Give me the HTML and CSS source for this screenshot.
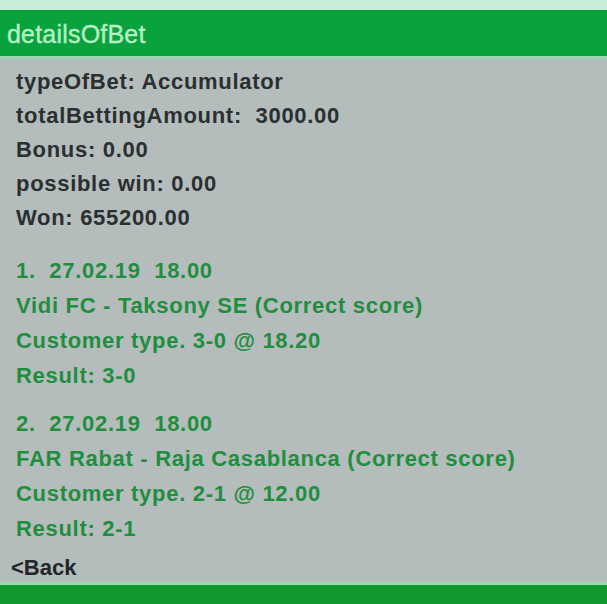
FILE: index.html
```html
<!DOCTYPE html>
<html>
<head>
<meta charset="utf-8">
<link rel="stylesheet" href="styles.css">
</head>
<body>
<div class="page">
  <div class="topstrip"></div>
  <div class="header">detailsOfBet</div>
  <div class="edge"></div>
  <div class="content">
    <div class="summary">
      <div class="line">typeOfBet: Accumulator</div>
      <div class="line">totalBettingAmount:&nbsp; 3000.00</div>
      <div class="line">Bonus: 0.00</div>
      <div class="line">possible win: 0.00</div>
      <div class="line">Won: 655200.00</div>
    </div>
    <div class="event">
      <div class="line">1.&nbsp; 27.02.19&nbsp; 18.00</div>
      <div class="line">Vidi FC - Taksony SE (Correct score)</div>
      <div class="line">Customer type. 3-0 @ 18.20</div>
      <div class="line">Result: 3-0</div>
    </div>
    <div class="event last">
      <div class="line">2.&nbsp; 27.02.19&nbsp; 18.00</div>
      <div class="line">FAR Rabat - Raja Casablanca (Correct score)</div>
      <div class="line">Customer type. 2-1 @ 12.00</div>
      <div class="line">Result: 2-1</div>
    </div>
    <div class="back">&lt;Back</div>
  </div>
  <div class="edge"></div>
  <div class="footer"></div>
</div>
</body>
</html>
```
FILE: styles.css
```css
html, body {
  margin: 0;
  padding: 0;
}
body {
  width: 607px;
  height: 604px;
  overflow: hidden;
  background: #b4bcbc;
  font-family: "Liberation Sans", Arial, sans-serif;
}
.page {
  display: flex;
  flex-direction: column;
  height: 604px;
}
.topstrip {
  height: 10px;
  background: #c6eed6;
}
.header {
  height: 46px;
  background: #09a23c;
  color: #b6f0c6;
  font-size: 25px;
  line-height: 48px;
  padding-left: 7px;
  letter-spacing: 0.2px;
  -webkit-text-stroke: 0.4px #b6f0c6;
}
.edge {
  height: 3px;
  background: #9ad8b0;
}
.content {
  flex: 1;
  display: flex;
  flex-direction: column;
  padding: 6px 0 0 16px;
}
.line {
  font-size: 22px;
  font-weight: bold;
  letter-spacing: 0.7px;
  height: 34px;
  line-height: 34px;
}
.summary {
  color: #2a2f30;
  margin-bottom: 18px;
}
.event {
  color: #1f8e3f;
  margin-bottom: 13px;
}
.event.last {
  margin-bottom: 8px;
}
.event .line {
  height: 35px;
  line-height: 35px;
}
.back {
  color: #222628;
  font-size: 22px;
  font-weight: bold;
  margin-left: -5px;
  line-height: 28px;
  height: 28px;
}
.footer {
  flex: 1;
  background: #12992f;
}
```
